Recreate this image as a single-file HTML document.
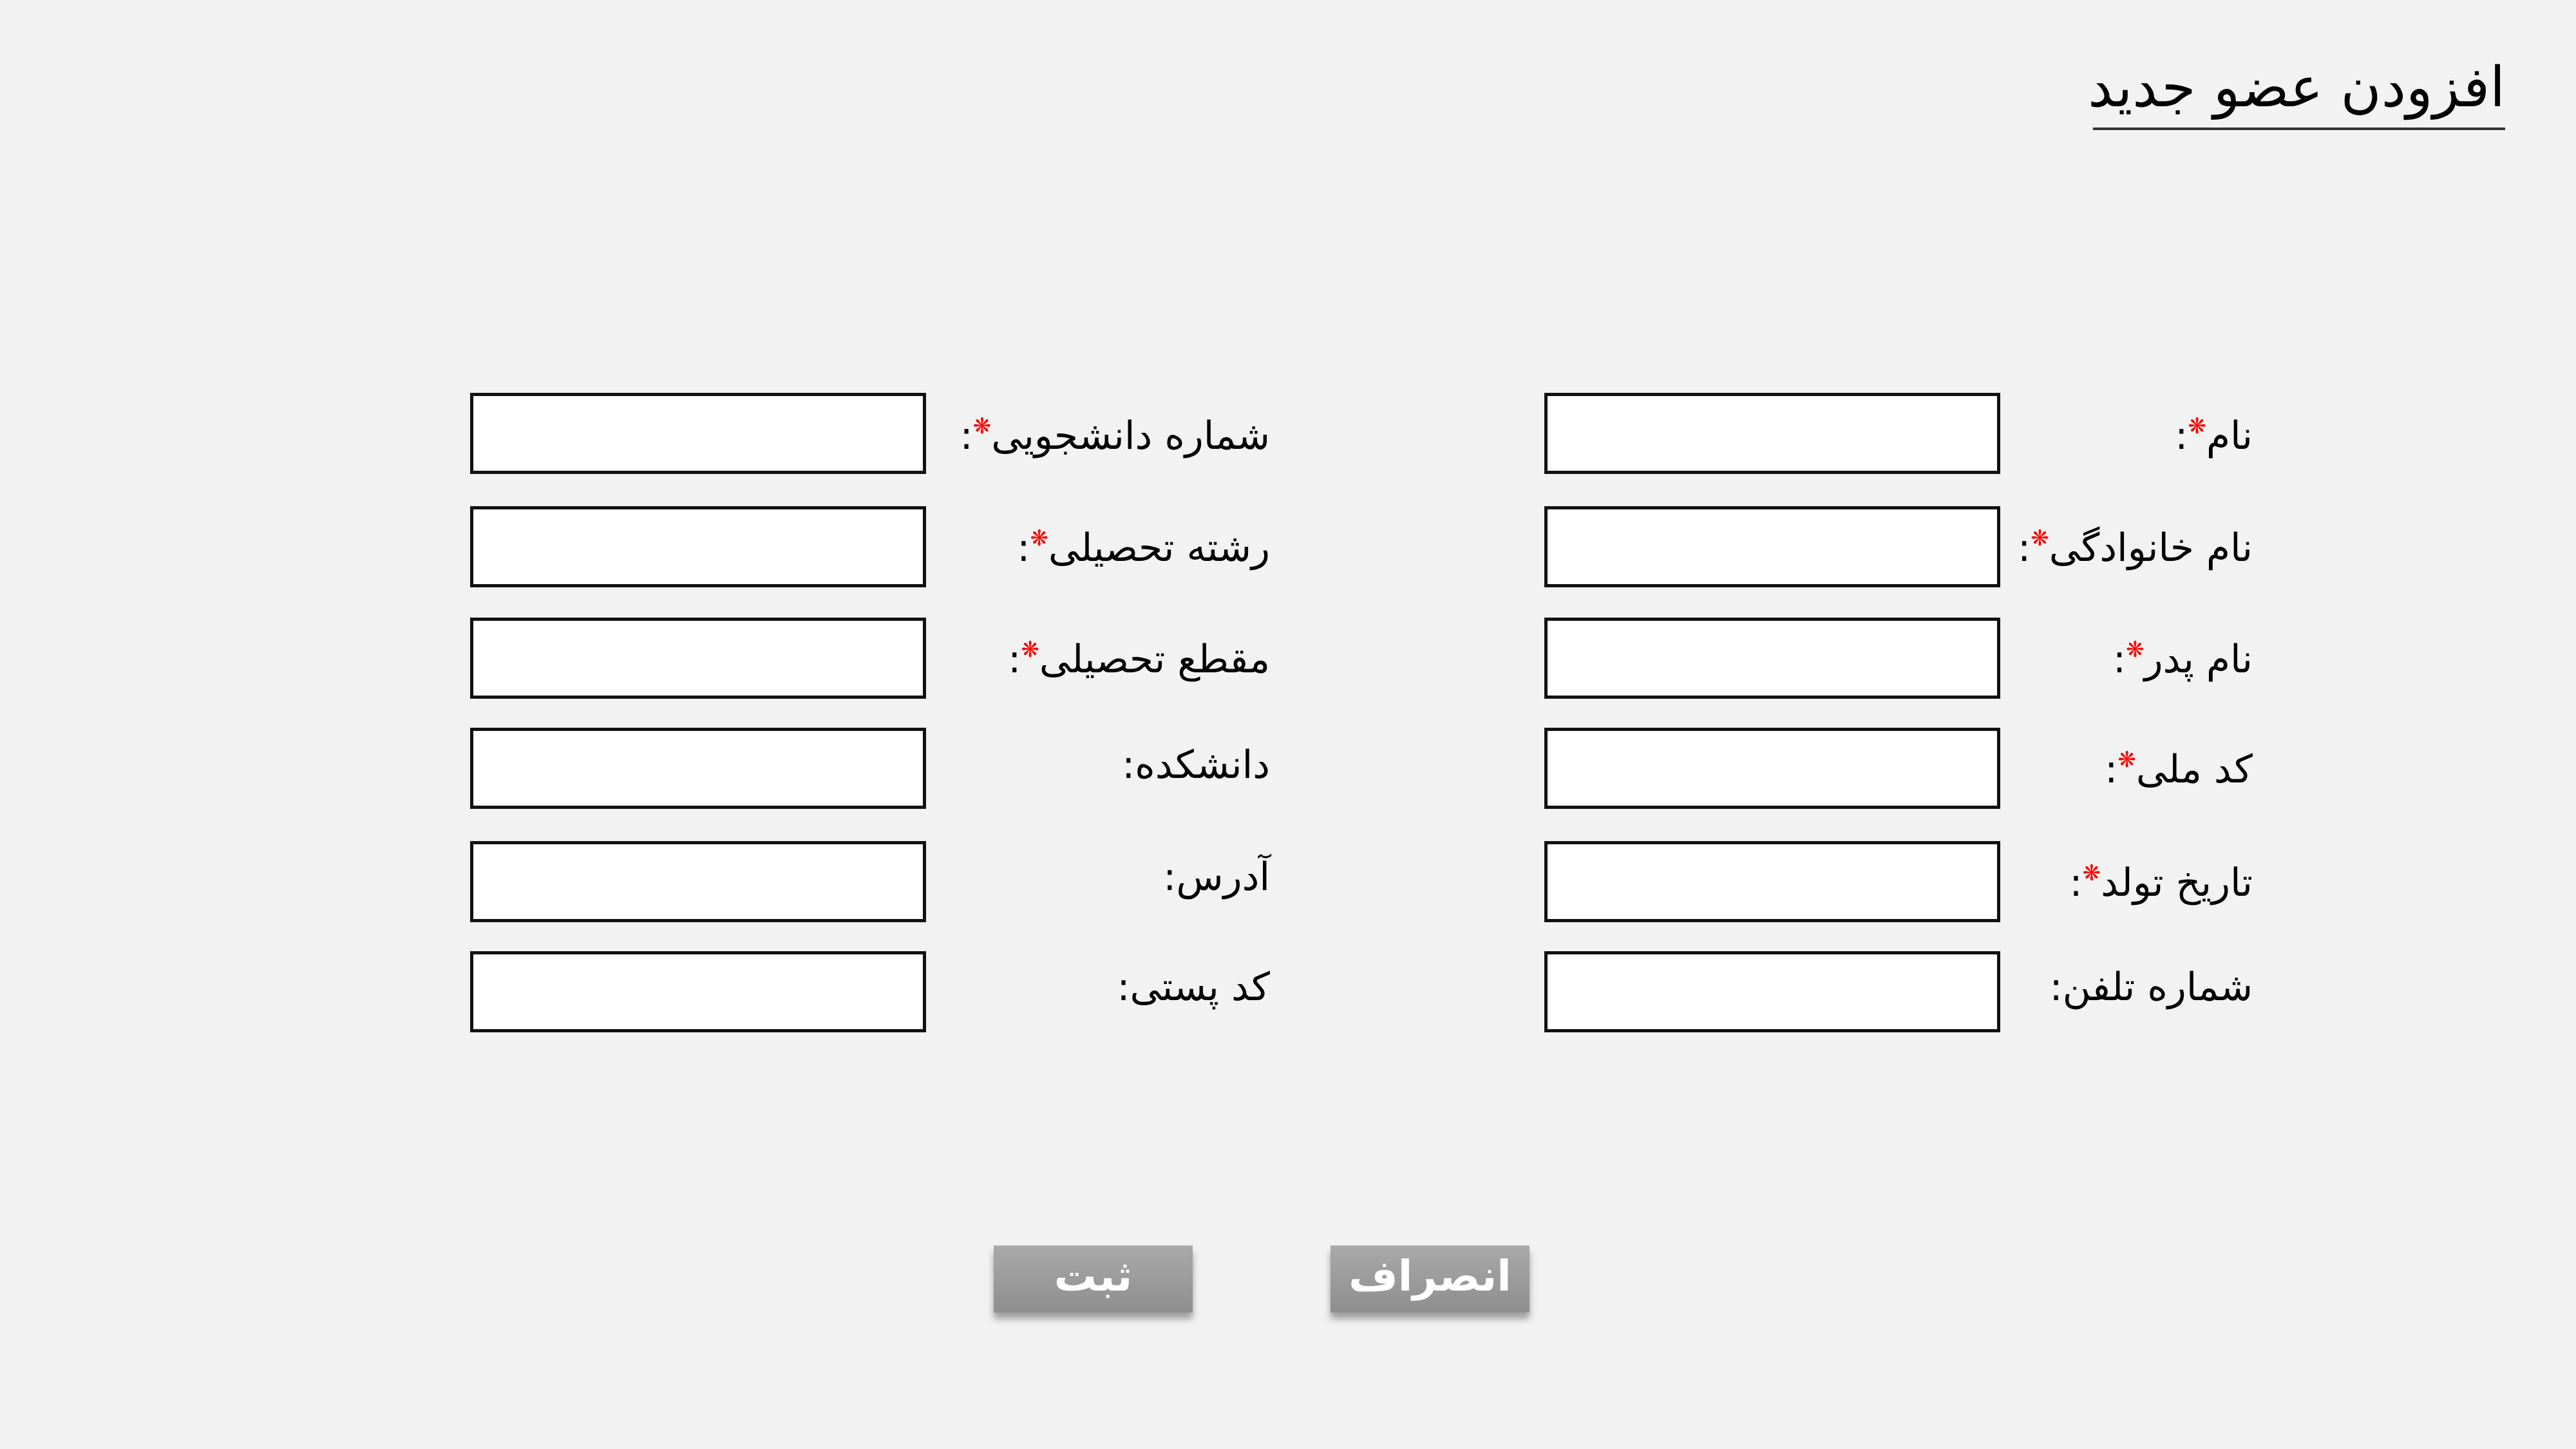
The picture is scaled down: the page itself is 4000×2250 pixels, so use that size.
<!DOCTYPE html>
<html><head><meta charset="utf-8"><style>
body{margin:0;width:4000px;height:2250px;background:#f2f2f2;position:relative;overflow:hidden;font-family:"DejaVu Sans","Liberation Sans",sans-serif;}
.t{position:absolute;right:110px;top:76px;font-size:86px;direction:rtl;border-bottom:4px solid #333;padding:0;width:640px;text-align:right;line-height:120px;white-space:nowrap;height:122px}
.in{position:absolute;width:698px;height:116px;border:5px solid #111;background:#fff;box-sizing:content-box}
.l{position:absolute;direction:rtl;font-size:60px;text-align:right;white-space:nowrap;line-height:80px}
.s{color:#f00;font-size:34px;vertical-align:24px}
.b{position:absolute;width:309px;height:104px;top:1934px;background:linear-gradient(#a9a9a9,#8e8e8e);box-shadow:0 10px 10px rgba(0,0,0,.35);color:#fff;font-weight:bold;font-size:66px;text-align:center;line-height:96px;direction:rtl}
</style></head><body>
<div class="t">افزودن عضو جدید</div>

<div class="in" style="left:2398px;top:610px"></div>
<div class="in" style="left:2398px;top:786px"></div>
<div class="in" style="left:2398px;top:959px"></div>
<div class="in" style="left:2398px;top:1130px"></div>
<div class="in" style="left:2398px;top:1306px"></div>
<div class="in" style="left:2398px;top:1477px"></div>
<div class="in" style="left:730px;top:610px"></div>
<div class="in" style="left:730px;top:786px"></div>
<div class="in" style="left:730px;top:959px"></div>
<div class="in" style="left:730px;top:1130px"></div>
<div class="in" style="left:730px;top:1306px"></div>
<div class="in" style="left:730px;top:1477px"></div>

<div class="l" style="right:502px;top:622px">نام<span class="s">❋</span>:</div>
<div class="l" style="right:502px;top:796px">نام خانوادگی<span class="s">❋</span>:</div>
<div class="l" style="right:502px;top:969px">نام پدر<span class="s">❋</span>:</div>
<div class="l" style="right:502px;top:1140px">کد ملی<span class="s">❋</span>:</div>
<div class="l" style="right:502px;top:1316px">تاریخ تولد<span class="s">❋</span>:</div>
<div class="l" style="right:502px;top:1493px">شماره تلفن:</div>

<div class="l" style="right:2028px;top:622px">شماره دانشجویی<span class="s">❋</span>:</div>
<div class="l" style="right:2028px;top:796px">رشته تحصیلی<span class="s">❋</span>:</div>
<div class="l" style="right:2028px;top:969px">مقطع تحصیلی<span class="s">❋</span>:</div>
<div class="l" style="right:2028px;top:1148px">دانشکده:</div>
<div class="l" style="right:2028px;top:1322px">آدرس:</div>
<div class="l" style="right:2028px;top:1493px">کد پستی:</div>

<div class="b" style="left:1543px">ثبت</div>
<div class="b" style="left:2066px">انصراف</div>
</body></html>
